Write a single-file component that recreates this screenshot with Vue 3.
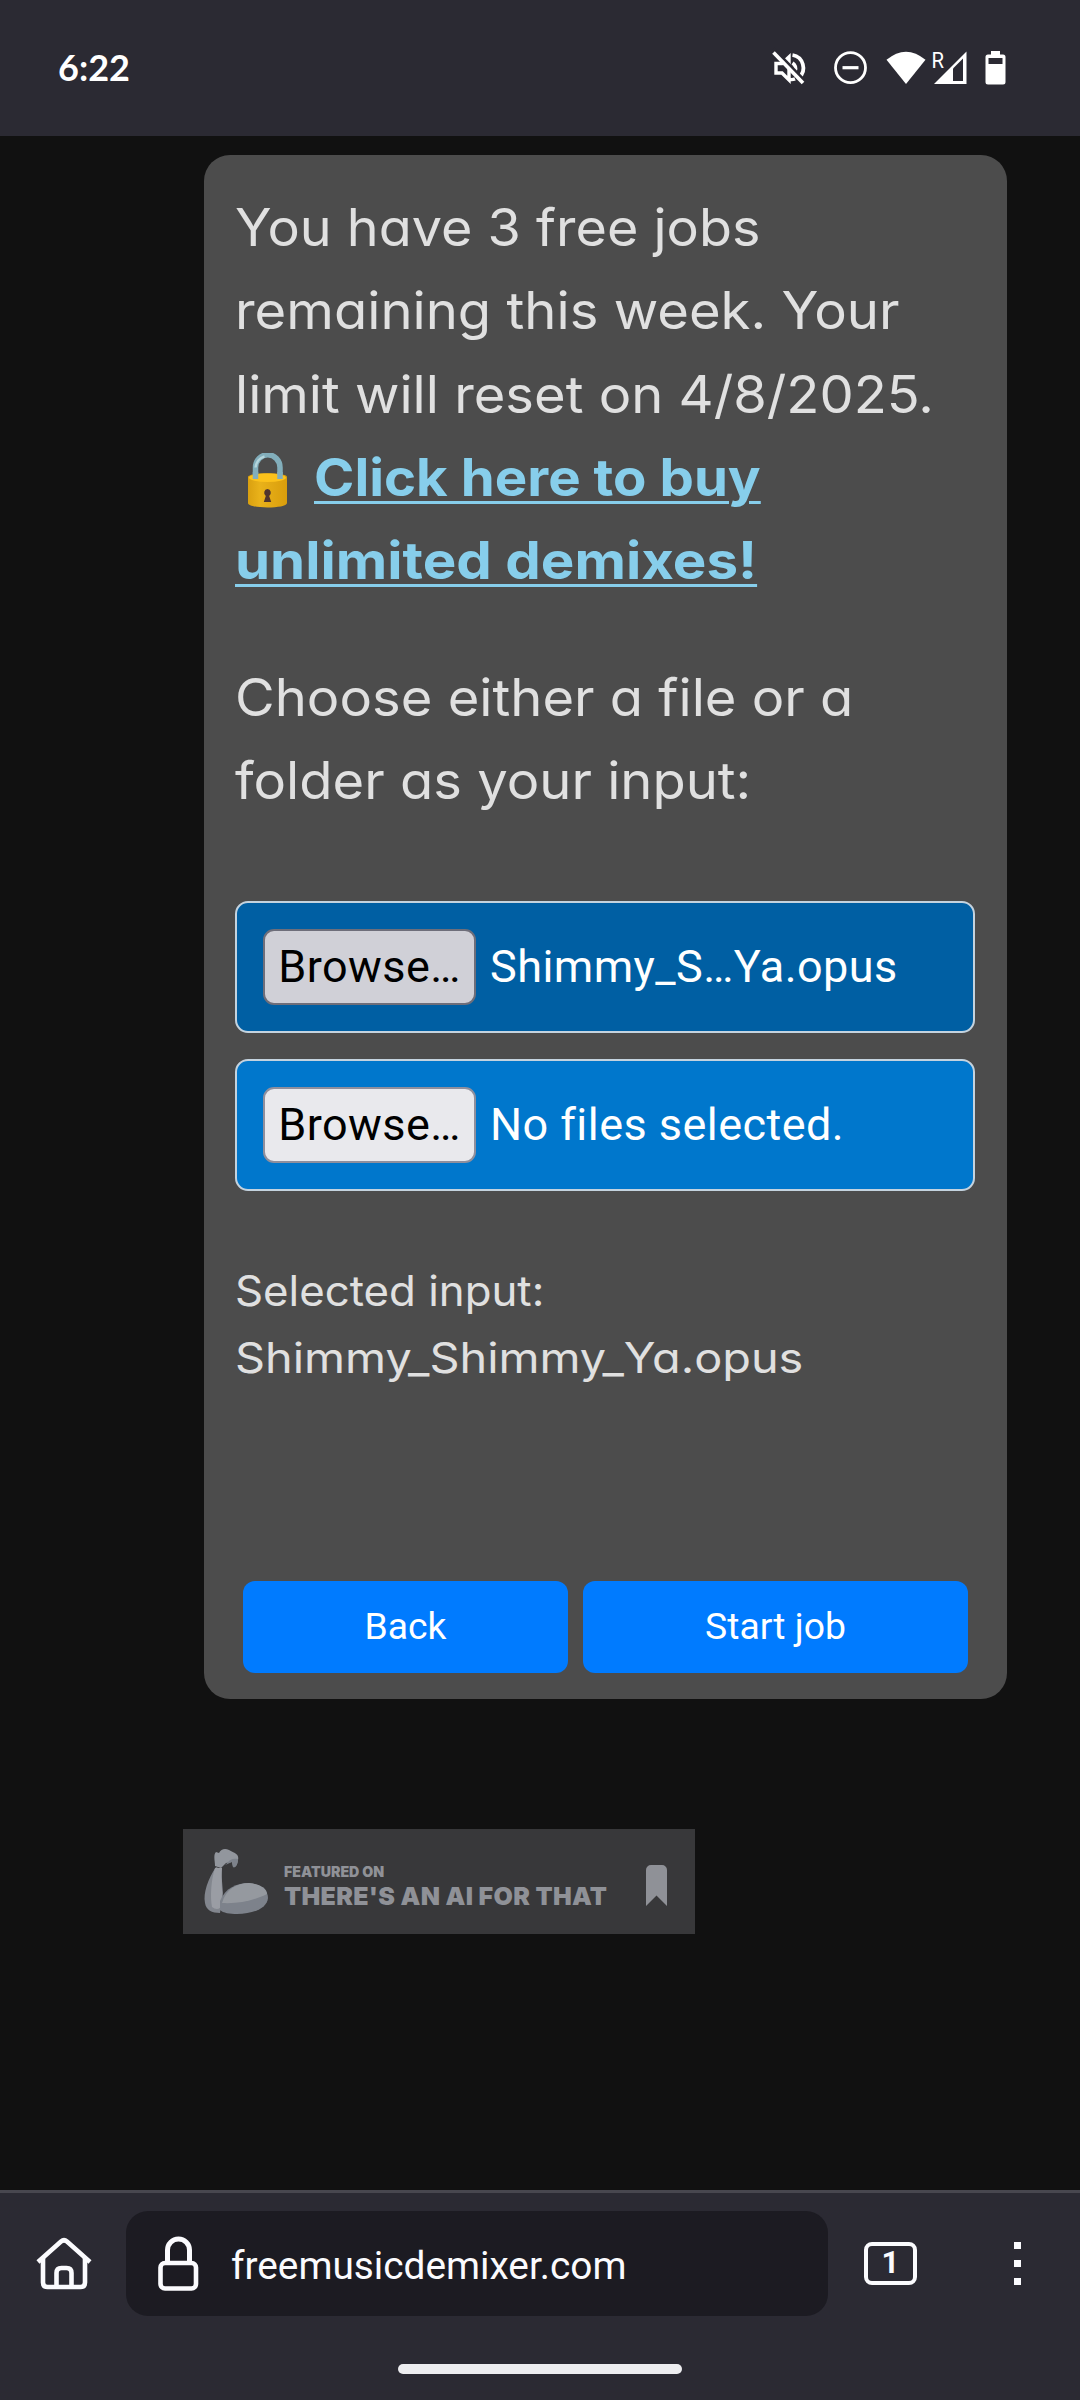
<script setup>
const intro = [
  { text: 'You have 3 free jobs', stretch: 1.037 },
  { text: 'remaining this week. Your', stretch: 1.046 },
  { text: 'limit will reset on 4/8/2025.', stretch: 1.044 },
]
const choose = [
  { text: 'Choose either a file or a', stretch: 1.045 },
  { text: 'folder as your input:', stretch: 1.045 },
]
const selected = [
  { text: 'Selected input:', stretch: 1.042 },
  { text: 'Shimmy_Shimmy_Ya.opus', stretch: 1.115 },
]
const pickers = [
  { label: 'Shimmy_S…Ya.opus', active: true },
  { label: 'No files selected.', active: false },
]
const widen = (n) => ({ transform: `scaleX(${n})` })
</script>

<template>
  <div class="screen">
    <header class="status">
      <span class="clock">6:22</span>
      <svg class="status-icons" width="236" height="36" viewBox="0 0 236 36" fill="none">
        <path d="M4 13.500h6l7-6.500v23l-7-7H4z" stroke="#fff" stroke-width="3.400" />
        <path d="M20.500 5a13 13 0 0 1 6.500 22.500" stroke="#fff" stroke-width="3.800" />
        <path d="M20.500 13a6.500 6.500 0 0 1 2.500 8" stroke="#fff" stroke-width="3.800" />
        <path d="M18 29.500q3 .3 5-.6" stroke="#fff" stroke-width="3.400" />
        <path d="M1.500 -1.500l32 33" stroke="#2b2a33" stroke-width="3" />
        <path d="M1.500 2.500l29.500 30.500" stroke="#fff" stroke-width="3.600" />
        <circle cx="78.500" cy="17.700" r="15" stroke="#fff" stroke-width="2.800" />
        <path d="M70.500 17.700h16" stroke="#fff" stroke-width="3.200" />
        <path d="M114.500 9.800Q134 -6.500 153.500 9.800L134 34z" fill="#fff" />
        <path d="M162 34L194.500 1.500V34z" fill="#fff" />
        <path d="M181 18.500l10-10V31h-10z" fill="#2b2a33" />
        <path d="M219 1h9v3.500h3a2.500 2.500 0 0 1 2.500 2.500v25a2.500 2.500 0 0 1-2.500 2.500h-15a2.500 2.500 0 0 1-2.500-2.500V7a2.500 2.500 0 0 1 2.500-2.500h3z" fill="#fff" />
        <path d="M216.500 8h14v6h-14z" fill="#2b2a33" />
        <text x="159.500" y="17.500" font-family="Roboto, sans-serif" font-size="22" textLength="12.500" lengthAdjust="spacingAndGlyphs" fill="#fff">R</text>
      </svg>
    </header>

    <main class="page">
      <section class="card">
        <div class="copy">
          <div v-for="l in intro" :key="l.text" class="line"><span class="wide" :style="widen(l.stretch)">{{ l.text }}</span></div>
          <div class="line buy">
            <svg class="padlock" width="42" height="56" viewBox="0 0 42 56">
              <defs>
                <linearGradient id="gold" x1="0" x2="1"><stop offset="0" stop-color="#d9a010" /><stop offset=".3" stop-color="#e9b21a" /><stop offset="1" stop-color="#d99d0c" /></linearGradient>
              </defs>
              <path d="M8.500 27V14.500a12 12.500 0 0 1 24.500 0V27" fill="none" stroke="#82aebb" stroke-width="5.500" />
              <path d="M8.500 14.500a12 12.500 0 0 1 9-11" fill="none" stroke="#b4d5dc" stroke-width="2.500" />
              <path d="M1 24c0-5 39-5 39 0v26c0 6-39 6-39 0z" fill="url(#gold)" />
              <ellipse cx="20.500" cy="24.800" rx="18.500" ry="4.200" fill="#fcc21b" />
              <path d="M8.500 19v7M33 19v7" stroke="#82aebb" stroke-width="5.500" />
              <path d="M20.500 36a3.500 3.800 0 0 1 1.700 7l2 6h-7.400l2-6a3.500 3.800 0 0 1 1.700-7z" fill="#4e342e" />
            </svg>
            <a class="wide" :style="widen(1.05)">Click here to buy</a>
          </div>
          <div class="line"><a class="wide" :style="widen(1.085)">unlimited demixes!</a></div>
        </div>
        <div class="copy choose">
          <div v-for="l in choose" :key="l.text" class="line"><span class="wide" :style="widen(l.stretch)">{{ l.text }}</span></div>
        </div>
        <div class="pickers">
          <div v-for="p in pickers" :key="p.label" class="picker" :class="{ active: p.active }">
            <span class="browse">Browse…</span>
            <span>{{ p.label }}</span>
          </div>
        </div>
        <div class="selected">
          <div v-for="l in selected" :key="l.text"><span class="wide" :style="widen(l.stretch)">{{ l.text }}</span></div>
        </div>
        <div class="actions">
          <button class="back">Back</button>
          <button class="start">Start job</button>
        </div>
      </section>

      <aside class="badge">
        <svg class="arm" width="66" height="68" viewBox="0 0 66 68">
          <path d="M13 18C5 30 0 44 2 54c1 7 7 10 15 10l3-20-2-24z" fill="#82868e" />
          <path d="M12 19h7c-1 12 0 24 1 36-3 6-7 6-11 3-2-10-1-27 3-39z" fill="#9a9da4" />
          <path d="M17 52C22 39 34 34 46 34c11 1 19 7 19 15-1 10-14 16-31 16-7 0-14-1-17-4z" fill="#7d828b" />
          <path d="M19 54C23 40 34 34 46 34c10 1 18 5 18 11-12 6-28 10-45 9z" fill="#95999f" />
          <path d="M12 17c0-5-2-11 1-14l3 1c2-4 6-5 10-3 8 4 10 5 9 10-1 6-3 8-5 7l-1-5-6 1-5 5z" fill="#92969d" />
          <path d="M20 17c6-2 5-9 15-7 0 5-2 9-5 8l-1-5z" fill="#7d828b" />
        </svg>
        <div class="badge-text">
          <span class="small">FEATURED ON</span>
          <span class="big">THERE'S AN AI FOR THAT</span>
        </div>
        <svg class="mark" width="21" height="41" viewBox="0 0 21 41"><path d="M0 5a5 5 0 0 1 5-5h11a5 5 0 0 1 5 5v36L10.500 30.500 0 41z" fill="#8f9197" /></svg>
      </aside>
    </main>

    <footer class="toolbar">
      <div class="bar">
        <svg class="home" width="58" height="56" viewBox="0 0 58 56" fill="none" stroke="#fbfbfe" stroke-width="4.600">
          <path d="M3 26L26 5.500q3-2.500 6 0L55 26" />
          <path d="M8 22v24.500q0 4.500 4.500 4.500h33q4.500 0 4.500-4.500V22" />
          <path d="M21.500 51V37q0-5 5-5h5q5 0 5 5v14" />
        </svg>
        <div class="url">
          <svg class="secure" width="41" height="55" viewBox="0 0 41 55" fill="none" stroke="#fbfbfe">
            <rect x="2.500" y="27" width="35.500" height="25.500" rx="4.500" stroke-width="4.600" />
            <path d="M9.500 27V14a11 11 0 0 1 22 0v13" stroke-width="5" />
          </svg>
          <span class="host">freemusicdemixer.com</span>
        </div>
        <div class="tabs">1</div>
        <div class="menu"><i></i><i></i><i></i></div>
      </div>
      <div class="pill"></div>
    </footer>
  </div>
</template>

<style>
body { background: #111; }
</style>
<style scoped>
.screen { width: 1080px; height: 2400px; display: flex; flex-direction: column; background: #111; overflow: hidden; }
.status { height: 136px; box-sizing: border-box; flex: none; background: #2b2a33; display: flex; justify-content: space-between; align-items: flex-start; padding: 50px 72.500px 0 58px; }
.status-icons { overflow: visible; }
.clock { font: 700 36px/34px Lato, sans-serif; color: #fff; }
.page { flex: 1; min-height: 0; padding: 19px 0 0 183px; }
.card { width: 803px; height: 1544px; box-sizing: border-box; margin-left: 21px; padding: 31px 32px 0 31px; background: #4c4c4c; border-radius: 26px; color: #e0e0e0; display: flex; flex-direction: column; }
.copy, .selected { font-family: Inter, "Open Sans", sans-serif; font-feature-settings: "cv11", "calt" 0; white-space: nowrap; }
.copy { font-size: 52px; line-height: 83.300px; }
.line { height: 83.300px; }
.wide { display: inline-block; transform-origin: 0 50%; }
.buy { display: flex; }
.padlock { margin: 17px 25px 0 12px; flex: none; }
a { color: #87ceeb; font-weight: 700; text-decoration: underline; text-decoration-thickness: 3px; text-underline-offset: 5px; }
.choose { margin-top: 53.500px; }
.pickers { margin-top: 78.500px; display: flex; flex-direction: column; gap: 26px; }
.picker { height: 132px; box-sizing: border-box; border: 2px solid #c4d3df; border-radius: 13px; background: #0077cc; color: #fff; display: flex; align-items: center; padding-left: 26px; gap: 14px; font: 45px Roboto, sans-serif; letter-spacing: .45px; white-space: nowrap; }
.picker > span { padding-bottom: 1px; }
.picker.active { background: #005fa3; }
.browse { width: 213px; height: 76px; box-sizing: border-box; border: 2px solid #8f8f9d; border-radius: 11px; background: #e9e9ed; color: #000; display: flex; align-items: center; justify-content: center; }
.active .browse { background: #d0d0d7; border-color: #6e6e7a; }
.selected { margin-top: 66px; font-size: 42px; line-height: 67px; }
.actions { margin: auto 7px 26px 8px; display: flex; gap: 15px; }
button { height: 92px; border: 0; padding: 0 0 2px; border-radius: 12px; background: #007bff; color: #fff; font: 37.300px Roboto, sans-serif; }
.back { width: 325px; }
.start { flex: 1; }
.badge { width: 512px; height: 105px; margin-top: 130px; box-sizing: border-box; background: #38383a; display: flex; align-items: flex-start; padding: 20px 28px 0 20px; }
.arm { margin-right: 15px; }
.badge-text { flex: 1; display: flex; flex-direction: column; align-items: flex-start; color: #8f9197; font-family: Inter, sans-serif; font-weight: 900; white-space: nowrap; padding-top: 16px; }
.small { font-size: 14.200px; line-height: 14px; }
.big { font-size: 25px; line-height: 26px; margin-top: 4px; letter-spacing: .3px; }
.mark { margin-top: 16px; }
.toolbar { height: 210px; box-sizing: border-box; flex: none; border-top: 3px solid #48474f; background: #2b2a33; padding-top: 18px; display: flex; flex-direction: column; align-items: center; }
.bar { width: 1080px; height: 105px; display: flex; align-items: center; }
.home { margin-left: 35px; }
.url { margin-left: 33px; width: 702px; height: 105px; box-sizing: border-box; border-radius: 22px; background: #1c1b22; display: flex; align-items: center; padding-left: 32px; gap: 32px; color: #fbfbfe; font: 38.800px Roboto, sans-serif; }
.host { padding-top: 3px; }
.tabs { margin-left: 36px; width: 53px; height: 43px; box-sizing: border-box; border: 4.500px solid #fbfbfe; border-radius: 8px; color: #fbfbfe; font: 700 31px/34px Roboto, sans-serif; text-align: center; }
.menu { margin-left: 97px; display: flex; flex-direction: column; gap: 11px; }
.menu i { width: 7px; height: 7px; background: #fbfbfe; }
.pill { margin-top: 48px; width: 284px; height: 10px; border-radius: 5px; background: #ededf0; }
</style>
